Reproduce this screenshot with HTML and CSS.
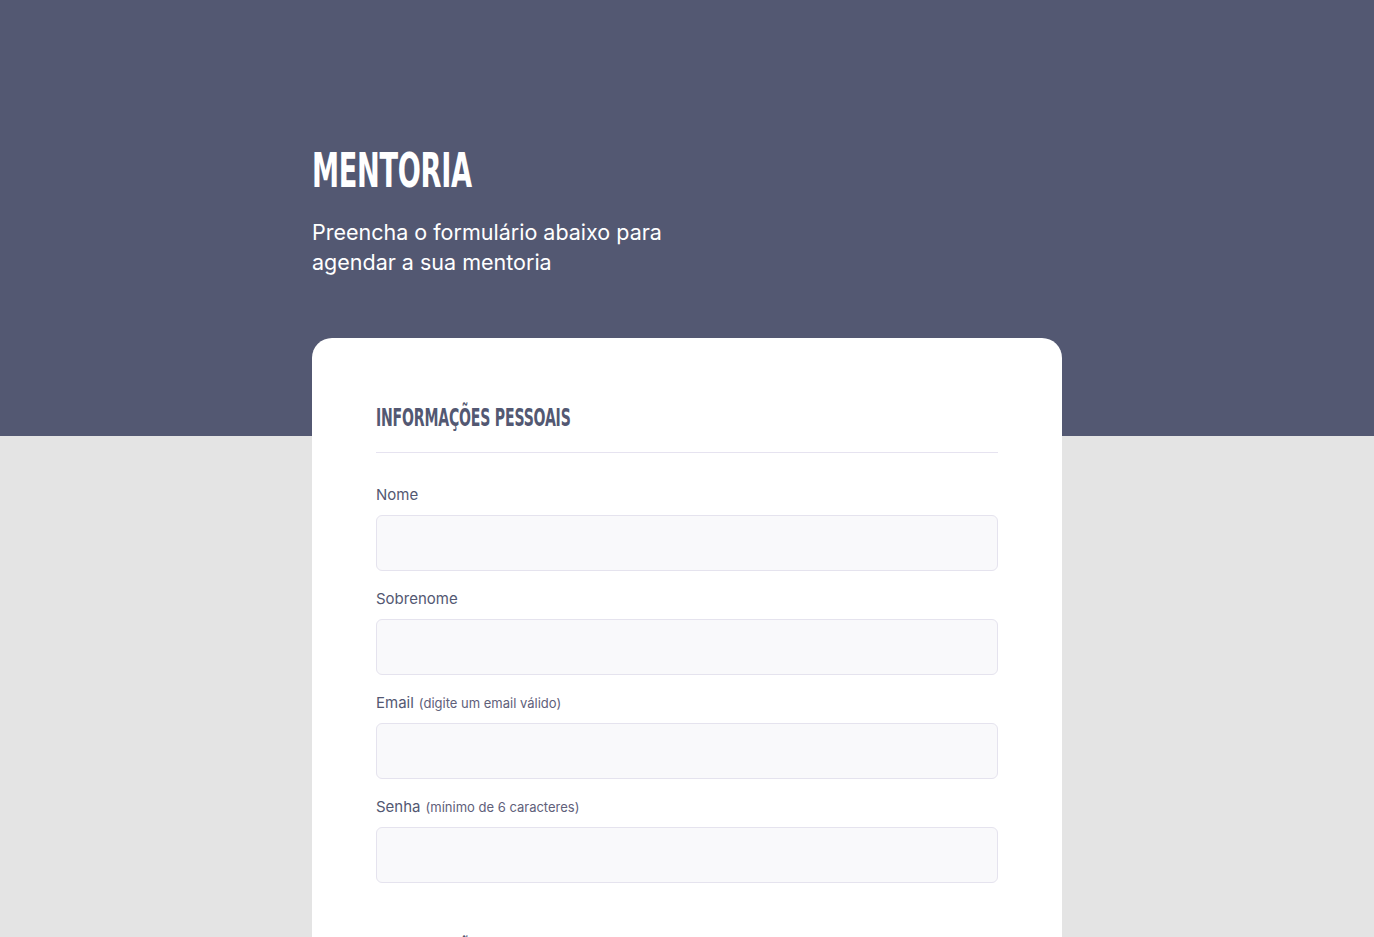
FILE: index.html
```html
<!DOCTYPE html>
<html lang="pt-BR">
<head>
<meta charset="utf-8">
<title>Mentoria</title>
<link rel="stylesheet" href="styles.css">
</head>
<body>
<main class="page">
  <header class="hero">
    <h1 class="hero-title"><span class="narrow">MENTORIA</span></h1>
    <p class="hero-text">Preencha o formulário abaixo para agendar a sua mentoria</p>
  </header>
  <form class="card">
    <section class="section">
      <h2 class="section-title"><span class="narrow">INFORMAÇÕES PESSOAIS</span></h2>
      <div class="field">
        <label class="label">Nome</label>
        <input class="input" type="text">
      </div>
      <div class="field">
        <label class="label">Sobrenome</label>
        <input class="input" type="text">
      </div>
      <div class="field">
        <label class="label">Email <span class="hint">(digite um email válido)</span></label>
        <input class="input" type="email">
      </div>
      <div class="field">
        <label class="label">Senha <span class="hint">(mínimo de 6 caracteres)</span></label>
        <input class="input" type="password">
      </div>
    </section>
    <section class="section">
      <h2 class="section-title"><span class="narrow">INFORMAÇÕES DA MENTORIA</span></h2>
    </section>
  </form>
</main>
</body>
</html>
```
FILE: styles.css
```css
* { box-sizing: border-box; }
html, body { margin: 0; padding: 0; }
body {
  background: linear-gradient(#535872 0, #535872 436px, #e4e4e4 436px);
  min-height: 100vh;
  font-family: "Inter", "Open Sans", sans-serif;
}
.page {
  width: 750px;
  margin: 0 auto;
}
.narrow {
  display: inline-block;
  white-space: nowrap;
  transform-origin: left center;
}
.hero {
  padding-top: 140px;
  padding-bottom: 61px;
}
.hero-title {
  margin: 0;
  font-family: "DejaVu Sans Condensed", "DejaVu Sans", sans-serif;
  font-weight: 700;
  font-size: 48px;
  line-height: 60px;
  color: #ffffff;
  letter-spacing: -0.5px;
}
.hero-title .narrow { transform: scaleX(0.63); }
.hero-text {
  margin: 17px 0 0;
  width: 380px;
  font-size: 21.5px;
  line-height: 30px;
  color: #ffffff;
}
.card {
  background: #ffffff;
  border-radius: 20px 20px 0 0;
  padding: 64px 64px 0;
  min-height: 700px;
}
.section-title {
  margin: 0;
  padding-bottom: 18px;
  border-bottom: 1px solid #e6e3f0;
  font-family: "DejaVu Sans Condensed", "DejaVu Sans", sans-serif;
  font-weight: 700;
  font-size: 25px;
  line-height: 32px;
  color: #535872;
  letter-spacing: -0.3px;
}
.section-title .narrow { transform: scaleX(0.625); }
.section { margin-bottom: 52px; }
.section-title + .field { margin-top: 32px; }
.field {
  display: flex;
  flex-direction: column;
  margin-bottom: 18px;
}
.label {
  display: flex;
  align-items: baseline;
  gap: 5px;
  height: 20px;
  font-size: 15px;
  line-height: 20px;
  color: #535872;
  margin-bottom: 10px;
}
.hint {
  font-size: 13px;
  color: #60607a;
}
.input {
  height: 56px;
  border: 1px solid #e5e3ee;
  border-radius: 6px;
  background: #f9f9fb;
  font-size: 14px;
  padding: 0 16px;
}
```
